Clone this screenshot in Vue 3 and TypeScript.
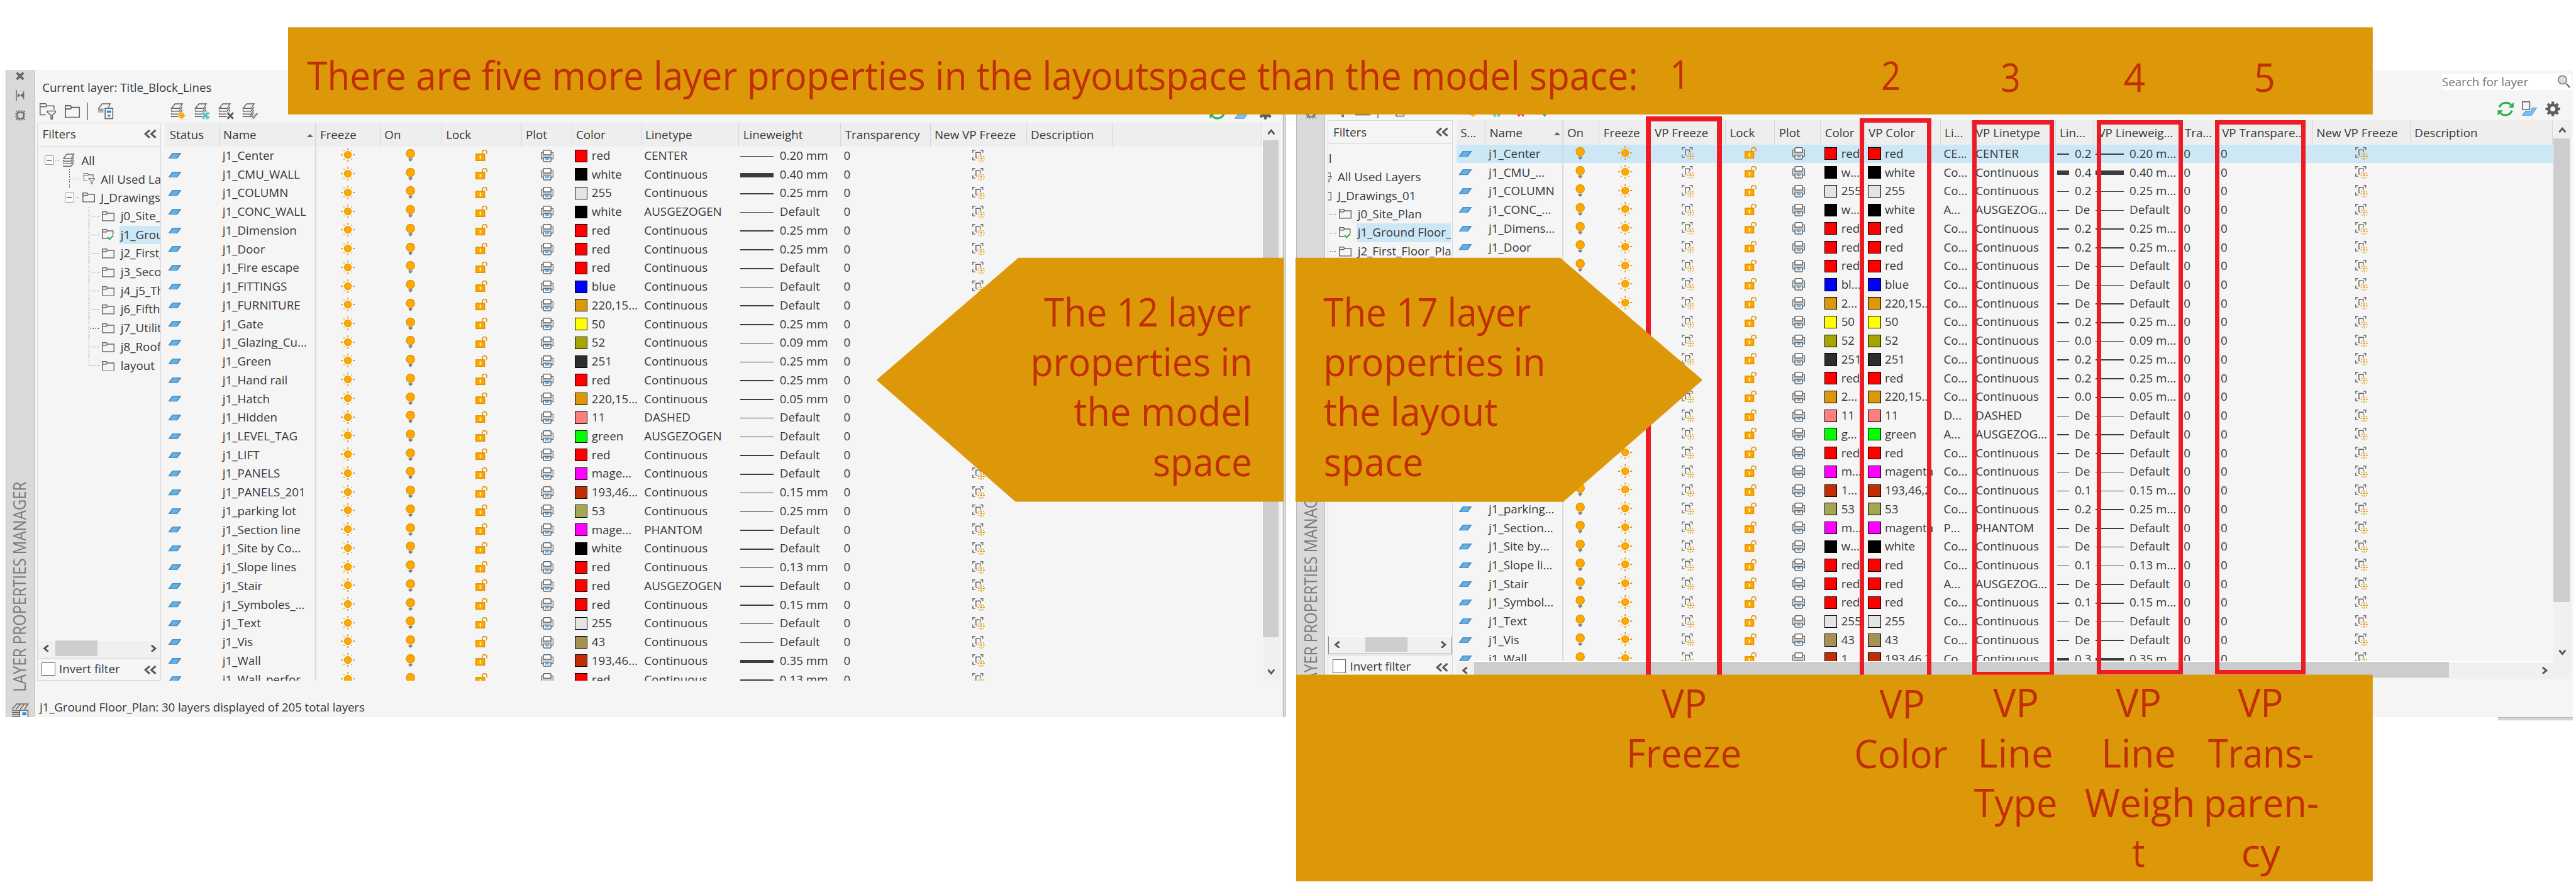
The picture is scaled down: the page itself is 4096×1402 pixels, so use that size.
<script setup lang="ts">
interface Column {
  id: string
  head: string
  width: number
  pad: number
}

interface Layer {
  name: string
  short: string
  swatch: string
  color: string
  shortColor: string
  vpColor: string
  linetype: string
  weight: string
}

interface Panel {
  id: string
  columns: Column[]
  rows: Layer[]
  folders: string[]
}

const HEX: Record<string, string> = {
  red: '#ff0000', white: '#000000', '255': '#e4e4e4', blue: '#0000ff',
  '220': '#dc9808', '50': '#ffff00', '52': '#a5a500', '251': '#2d2d2d',
  '11': '#ff7f7f', green: '#00ff00', magenta: '#ff00ff', '193': '#c12e02',
  '53': '#a5a552', '43': '#a59152',
}
const LONG: Record<string, string> = { magenta: 'mage...', '220': '220,15...', '193': '193,46...' }
const SHORT: Record<string, string> = {
  white: 'w...', blue: 'bl...', '220': '2...', green: 'g...', magenta: 'm...', '193': '1...',
}
const VP: Record<string, string> = { '220': '220,15...', '193': '193,46,2' }

// name | truncated name | colour | linetype | lineweight
// rows 7 to 19 have no truncated name: the arrow lies over that column there
const source = `j1_Center|j1_Center|red|CENTER|0.20
j1_CMU_WALL|j1_CMU_...|white|Continuous|0.40
j1_COLUMN|j1_COLUMN|255|Continuous|0.25
j1_CONC_WALL|j1_CONC_...|white|AUSGEZOGEN|Default
j1_Dimension|j1_Dimens...|red|Continuous|0.25
j1_Door|j1_Door|red|Continuous|0.25
j1_Fire escape||red|Continuous|Default
j1_FITTINGS||blue|Continuous|Default
j1_FURNITURE||220|Continuous|Default
j1_Gate||50|Continuous|0.25
j1_Glazing_Cu...||52|Continuous|0.09
j1_Green||251|Continuous|0.25
j1_Hand rail||red|Continuous|0.25
j1_Hatch||220|Continuous|0.05
j1_Hidden||11|DASHED|Default
j1_LEVEL_TAG||green|AUSGEZOGEN|Default
j1_LIFT||red|Continuous|Default
j1_PANELS||magenta|Continuous|Default
j1_PANELS_201||193|Continuous|0.15
j1_parking lot|j1_parking...|53|Continuous|0.25
j1_Section line|j1_Section...|magenta|PHANTOM|Default
j1_Site by Co...|j1_Site by...|white|Continuous|Default
j1_Slope lines|j1_Slope li...|red|Continuous|0.13
j1_Stair|j1_Stair|red|AUSGEZOGEN|Default
j1_Symboles_...|j1_Symbol...|red|Continuous|0.15
j1_Text|j1_Text|255|Continuous|Default
j1_Vis|j1_Vis|43|Continuous|Default
j1_Wall|j1_Wall|193|Continuous|0.35
j1_Wall_perfor...||red|Continuous|0.13`

const layers: Layer[] = source.split('\n').map((line) => {
  const [name, short, c, linetype, weight] = line.split('|')
  return {
    name, short, linetype, weight,
    swatch: HEX[c], color: LONG[c] ?? c, shortColor: SHORT[c] ?? c, vpColor: VP[c] ?? c,
  }
})

const cols = (start: number, list: [string, string, number, number][]): Column[] =>
  list.map(([id, head, end, pad], i) => ({
    id, head, pad, width: end - (i === 0 ? start : list[i - 1][2]),
  }))

const panels: Panel[] = [
  {
    id: 'model',
    rows: layers,
    folders: ['j0_Site_', 'j1_Ground', 'j2_First_', 'j3_Secon', 'j4_j5_Thi', 'j6_Fifth_', 'j7_Utility', 'j8_Roof_', 'layout'],
    columns: cols(498, [
      ['status', 'Status', 659.5, 6], ['name', 'Name', 950.5, 9.5], ['freeze', 'Freeze', 1144, 74.5],
      ['on', 'On', 1329, 75.5], ['lock', 'Lock', 1569, 100], ['plot', 'Plot', 1720, 57],
      ['color', 'Color', 1928, 9], ['linetype', 'Linetype', 2222.5, 9], ['weight', 'Lineweight', 2529, 4],
      ['zero', 'Transparency', 2798, 8], ['newvp', 'New VP Freeze', 3087.5, 125],
      ['blank', 'Description', 3346, 0], ['blank', '', 3795, 0],
    ]),
  },
  {
    id: 'layout',
    rows: layers.slice(0, 28),
    folders: ['j0_Site_Plan', 'j1_Ground Floor_P', 'j2_First_Floor_Plan'],
    columns: cols(4379, [
      ['status', 'S...', 4466.5, 6], ['name', 'Name', 4700, 9.5], ['on', 'On', 4809.5, 37.5],
      ['freeze', 'Freeze', 4963, 56.5], ['newvp', 'VP Freeze', 5189, 93.6], ['lock', 'Lock', 5337, 56],
      ['plot', 'Plot', 5475, 51.6], ['shortColor', 'Color', 5606, 11], ['vpColor', 'VP Color', 5835, 11],
      ['shortType', 'Li...', 5929, 9], ['vpType', 'VP Linetype', 6181, 11], ['shortWeight', 'Lin...', 6297, 4.5],
      ['vpWeight', 'VP Lineweig...', 6557, 4], ['zero', 'Tra...', 6669, 9],
      ['zero', 'VP Transpare...', 6953, 8], ['newvp', 'New VP Freeze', 7248, 129],
      ['blank', 'Description', 7676, 0],
    ]),
  },
]

const isText = (id: string) => ['name', 'linetype', 'shortType', 'vpType', 'zero'].includes(id)
const isSwatch = (id: string) => ['color', 'shortColor', 'vpColor'].includes(id)
const isWeight = (id: string) => ['weight', 'shortWeight', 'vpWeight'].includes(id)
const ICONS: Record<string, string> = {
  status: 'layer', freeze: 'sun', on: 'bulb', lock: 'lock', plot: 'printer', newvp: 'viewport',
}

const SHORT_TYPE: Record<string, string> = {
  CENTER: 'CE...', Continuous: 'Co...', AUSGEZOGEN: 'A...', DASHED: 'D...', PHANTOM: 'P...',
}

function cellText(id: string, row: Layer, panel: Panel): string {
  switch (id) {
    case 'name': return panel.id === 'model' ? row.name : row.short
    case 'linetype': return row.linetype
    case 'shortType': return SHORT_TYPE[row.linetype]
    case 'vpType': return row.linetype === 'AUSGEZOGEN' ? 'AUSGEZOG...' : row.linetype
    case 'color': return row.color
    case 'shortColor': return row.shortColor
    case 'vpColor': return row.vpColor
    case 'weight': return row.weight === 'Default' ? 'Default' : `${row.weight} mm`
    case 'vpWeight': return row.weight === 'Default' ? 'Default' : `${row.weight} m...`
    case 'shortWeight': return row.weight === 'Default' ? 'De' : row.weight.slice(0, 3)
    case 'zero': return '0'
    default: return ''
  }
}

const thickness = (w: string) => (w === '0.40' ? 13 : w === '0.35' ? 9 : 3)

const frames = [
  { x: 4947.5, y: 350, w: 229, h: 1700, b: 16 },
  { x: 5592, y: 356, w: 215, h: 1700, b: 14 },
  { x: 5929, y: 362, w: 247, h: 1670, b: 15 },
  { x: 6304, y: 362, w: 259, h: 1665, b: 15 },
  { x: 6660, y: 362, w: 272, h: 1665, b: 15 },
]

// text, left edge, baseline, drawn width
const notes: [string, number, number, number][] = [
  ['There are five more layer properties in the layoutspace than the model space:', 923, 271, 4002],
  ['1', 5021, 266, 59], ['2', 5656, 270, 59], ['3', 6016, 277, 59], ['4', 6385, 277, 65], ['5', 6777, 277, 64],
  ['The 12 layer', 3139, 981, 623], ['properties in', 3098, 1131, 668], ['the model', 3228, 1281, 535], ['space', 3466, 1431, 299],
  ['The 17 layer', 3979, 981, 624], ['properties in', 3979, 1131, 668], ['the layout', 3980, 1281, 523], ['space', 3980, 1431, 300],
  ['VP', 4995, 2158, 137], ['Freeze', 4890, 2307, 346],
  ['VP', 5651, 2160, 137], ['Color', 5575, 2309, 281],
  ['VP', 5993, 2156, 137], ['Line', 5946, 2306, 227], ['Type', 5935, 2456, 251],
  ['VP', 6362, 2156, 137], ['Line', 6318, 2306, 224], ['Weigh', 6268, 2456, 332], ['t', 6411, 2605, 38],
  ['VP', 6728, 2156, 137], ['Trans-', 6639, 2306, 318], ['paren-', 6625, 2456, 347], ['cy', 6738, 2605, 118],
]
</script>

<template>
  <div class="stage">
    <svg class="defs" width="0" height="0">
      <symbol id="layer" viewBox="0 0 41 18">
        <path d="M0 18 13 0H41L28 18Z" fill="#4c90c4" />
        <path d="M7 15 16 3H34L25 15Z" fill="#66b0e8" />
      </symbol>
      <symbol id="sun" viewBox="0 0 42 42">
        <path d="M21 0V6M21 36V42M0 21H6M36 21H42" stroke="#e39300" stroke-width="3" />
        <path d="M8 6h3v3h-3zM31 6h3v3h-3zM8 33h3v3h-3zM31 33h3v3h-3z" fill="#e39300" />
        <circle cx="21" cy="21" r="10.5" fill="#ffa800" stroke="#eb9900" stroke-width="2.5" />
      </symbol>
      <symbol id="bulb" viewBox="0 0 29 38">
        <circle cx="14.5" cy="13.5" r="12.6" fill="#ffa800" stroke="#dc9200" stroke-width="2.4" />
        <path d="M9 28H20V34H17V37H12V34H9Z" fill="#858585" />
      </symbol>
      <symbol id="lock" viewBox="0 0 36 35">
        <path d="M21 12V5L24 1.5H31L34 5V13" fill="none" stroke="#e39300" stroke-width="3" />
        <rect x="1.5" y="13" width="26" height="20" fill="#ffa800" stroke="#e39300" stroke-width="3" />
        <path d="M14.5 18V28" stroke="#fff" stroke-width="3.4" />
      </symbol>
      <symbol id="printer" viewBox="0 0 38 38">
        <path d="M7 8.500H1.500V27.500H7M31 8.500H36.500V27.500H31" fill="#e8e8e8" stroke="#666" stroke-width="3" />
        <path d="M3 9H35V26H3Z" fill="#f3f3f3" />
        <path d="M3 16H35V21H3Z" fill="#c9c9c9" />
        <path d="M7.500 15V4L9.500 1.500H28.500L30.500 4V15Z" fill="#fff" stroke="#666" stroke-width="3" />
        <path d="M7.500 23.500H30.500V33L28.500 36H9.500L7.500 33Z" fill="#fff" stroke="#666" stroke-width="3" />
        <path d="M13 25H25V31H13Z" fill="#66b0e8" />
      </symbol>
      <symbol id="viewport" viewBox="0 0 38 38">
        <path d="M1.500 9V1.500H9M24 1.500H31.500V9M1.500 22V30.500H9M11 24V8H24V16M11 24H14" fill="none" stroke="#666" stroke-width="2.800" />
        <path d="M26.500 17V23M26.500 32V38M16 27H21M32 27H38M26.500 24V30M23 27H30" stroke="#e39300" stroke-width="2.400" />
        <path d="M18.500 19h3v3h-3zM32 19h3v3h-3zM18.500 32h3v3h-3zM32 32h3v3h-3z" fill="#e39300" />
      </symbol>
      <symbol id="folder" viewBox="0 0 38 30">
        <path d="M1.500 28.500V1.500H14L17 5.500H36.500V28.500ZM1.500 9H14L17 5.500" fill="none" stroke="#666" stroke-width="2.800" />
      </symbol>
      <symbol id="folder-filter" viewBox="0 0 50 50">
        <path d="M18 35H1.500V1.500H18L22 8H43V20M1.500 11H18L22 8" fill="none" stroke="#666" stroke-width="2.900" />
        <path d="M23 23.500H48.500V27L38.500 36V48H34V36L23 27Z" fill="#f5f5f5" stroke="#666" stroke-width="2.900" />
      </symbol>
      <symbol id="folder-check" viewBox="0 0 38 36">
        <path d="M16 28.500H1.500V1.500H14L17 5.500H33.500V18M1.500 9H14L17 5.500" fill="none" stroke="#666" stroke-width="2.800" />
        <path d="M17 24 23 31 34 20" fill="none" stroke="#28b050" stroke-width="4" />
      </symbol>
      <symbol id="stack" viewBox="0 0 36 40">
        <path d="M2 15 12 2H33L25 15ZM2 19V23H24L33 11M2 28V31H24L33 19M2 36V38.500H24L33 27" fill="none" stroke="#666" stroke-width="2.800" />
      </symbol>
      <symbol id="stack-half" viewBox="0 0 50 50">
        <path d="M2 18 14 2H38L33 12M18 18H2M2 23H18" fill="none" stroke="#666" stroke-width="2.900" />
        <path d="M2 25H18V29H2Z" fill="#bbb" />
        <rect x="23" y="15.500" width="23" height="31" fill="#f5f5f5" stroke="#666" stroke-width="3" />
        <path d="M28 22H41V29H28Z" fill="#1d8ee8" />
        <path d="M34.500 33V42M30 37.500H39" stroke="#666" stroke-width="2.600" />
      </symbol>
      <symbol id="chevrons" viewBox="0 0 38 26">
        <path d="M17 1.500 4 13 17 24.500M35 1.500 22 13 35 24.500" fill="none" stroke="#5c5c5c" stroke-width="6" />
      </symbol>
      <symbol id="angle" viewBox="0 0 20 22">
        <path d="M16.500 1.500 5 11 16.500 20.500" fill="none" stroke="#555" stroke-width="5.500" />
      </symbol>
      <symbol id="gear" viewBox="0 0 46 46">
        <path d="M23 1V45M1 23H45M7.500 7.500 38.500 38.500M38.500 7.500 7.500 38.500" stroke="#5f5f5f" stroke-width="8" />
        <circle cx="23" cy="23" r="12" fill="#f5f5f5" stroke="#5f5f5f" stroke-width="9" />
      </symbol>
      <symbol id="refresh" viewBox="0 0 50 46">
        <path d="M6 18C11 3 32 0 41 11M44 28C39 43 18 46 9 35" fill="none" stroke="#27b24b" stroke-width="6" />
        <path d="M49 3V19H33ZM1 43V27H17Z" fill="#27b24b" />
      </symbol>
      <symbol id="sheet" viewBox="0 0 45 44">
        <rect x="1.500" y="1.500" width="22" height="23" fill="#f5f5f5" stroke="#666" stroke-width="3" />
        <path d="M1 42 11 30H26L31 20H44L29 42Z" fill="#7cc0f4" stroke="#5a9ad0" stroke-width="2" />
      </symbol>
    </svg>

    <div class="workspace">
      <section v-for="panel in panels" :key="panel.id" class="panel" :class="panel.id">
        <aside class="rail">
          <svg class="r-close" width="26" height="26" viewBox="0 0 26 26"><path d="M3 3 23 23M23 3 3 23" stroke="#666" stroke-width="7" /></svg>
          <svg class="r-pin" width="26" height="32" viewBox="0 0 26 32"><path d="M2 0V32M24 4V28" stroke="#777" stroke-width="3" /><path d="M6 11 13 16 6 22ZM23 9 14 16 23 23Z" fill="#666" stroke="#666" /></svg>
          <svg class="r-gear" width="32" height="32" viewBox="0 0 46 46">
            <circle cx="23" cy="23" r="14" fill="none" stroke="#6c6c6c" stroke-width="5" />
            <path d="M17 1V9M29 1V9M17 37V45M29 37V45M1 17H9M1 29H9M37 17H45M37 29H45M4 4 12 12M42 4 34 12M4 42 12 34M42 42 34 34" stroke="#6c6c6c" stroke-width="5" />
          </svg>
          <svg class="r-title" width="60" height="660" viewBox="0 0 60 660">
            <text transform="translate(48 650) rotate(-90)" textLength="632" lengthAdjust="spacingAndGlyphs">LAYER PROPERTIES MANAGER</text>
          </svg>
          <svg class="r-stack" width="52" height="42" viewBox="0 0 52 42">
            <path d="M2 18 16 2H50L40 18M14 18 28 2M26 18 38 4M2 22H24M2 28H24M2 34H24M2 40H24" fill="none" stroke="#666" stroke-width="2.800" />
            <rect x="25" y="21" width="25" height="30" fill="#f5f5f5" stroke="#666" stroke-width="3" />
            <path d="M33 27H45V36H33Z" fill="#1d8ee8" />
          </svg>
        </aside>

        <div class="content">
          <header class="top">
            <div class="title">
              <span v-if="panel.id === 'model'" class="current">Current layer: Title_Block_Lines</span>
              <label v-else class="search">
                <span>Search for layer</span>
                <svg width="40" height="40" viewBox="0 0 40 40"><path d="M27 26 38 38" stroke="#8a6a48" stroke-width="4.500" /><circle cx="16" cy="15" r="12.500" fill="#ddd" stroke="#888" stroke-width="3.500" /></svg>
              </label>
            </div>
            <div class="tools">
              <svg width="50" height="50"><use href="#folder-filter" /></svg>
              <svg class="t-folder" width="46" height="39" viewBox="0 0 38 30" preserveAspectRatio="none"><use href="#folder" width="38" height="30" /></svg>
              <i class="bar" />
              <svg class="t-state" width="50" height="50"><use href="#stack-half" /></svg>
              <svg class="t-new" width="50" height="50" viewBox="0 0 50 50">
                <use href="#stack" width="40" height="42" />
                <circle cx="34" cy="38" r="11" fill="#f5f5f5" />
                <path d="M34 26V49M22.500 37.500H45.500M27 30 41 45M41 30 27 45" stroke="#ffa800" stroke-width="3" /><circle cx="34" cy="37.500" r="7" fill="#ffa800" />
              </svg>
              <svg class="t-vp" width="50" height="50" viewBox="0 0 50 50">
                <use href="#stack" width="40" height="42" />
                <circle cx="34" cy="37" r="12" fill="#f5f5f5" />
                <path d="M29 25V49M38 25V49M22 32H46M22 41H46M24 28 44 46M44 28 24 46" stroke="#5bbcc6" stroke-width="3" />
              </svg>
              <svg class="t-del" width="50" height="50" viewBox="0 0 50 50">
                <use href="#stack" width="40" height="42" />
                <path d="M27 28 45 47M45 28 27 47" stroke="#f5f5f5" stroke-width="11" />
                <path class="mark-x" d="M28 29 45 47M45 29 28 47" stroke-width="5.500" />
              </svg>
              <svg class="t-set" width="50" height="50" viewBox="0 0 50 50">
                <use href="#stack" width="40" height="42" />
                <path class="mark-v" d="M25 34 34 44 46 30" fill="none" stroke-width="6" />
              </svg>
              <div class="corner">
                <svg width="50" height="46"><use href="#refresh" /></svg>
                <svg width="45" height="44"><use href="#sheet" /></svg>
                <svg width="46" height="46"><use href="#gear" /></svg>
              </div>
            </div>
          </header>

          <div class="main">
            <div class="filters">
              <div class="f-head"><span>Filters</span><svg width="38" height="26"><use href="#chevrons" /></svg></div>
              <div class="tree">
                <div class="scroll">
                  <div class="node all">
                    <i class="minus" /><i class="dots w14" />
                    <svg width="36" height="40"><use href="#stack" /></svg><span>All</span>
                  </div>
                  <div class="node used">
                    <i class="dots w30" /><svg width="37" height="34"><use href="#folder-filter" /></svg><span>All Used Layers</span>
                  </div>
                  <div class="node root">
                    <i class="minus" /><i class="dots w14" /><svg width="38" height="30"><use href="#folder" /></svg><span>J_Drawings_01</span>
                  </div>
                  <div v-for="(f, i) in panel.folders" :key="f" class="node leaf" :class="{ on: i === 1, last: i === 8 }">
                    <i class="dots w30" />
                    <svg v-if="i === 1" width="38" height="36"><use href="#folder-check" /></svg>
                    <svg v-else width="38" height="30"><use href="#folder" /></svg>
                    <span>{{ f }}</span>
                  </div>
                </div>
              </div>
              <div class="f-scroll">
                <svg width="20" height="22"><use href="#angle" /></svg>
                <i class="thumb" />
                <svg class="flip" width="20" height="22"><use href="#angle" /></svg>
              </div>
              <div class="f-foot"><i class="check" /><span>Invert filter</span><svg width="38" height="26"><use href="#chevrons" /></svg></div>
            </div>

            <div class="grid">
              <div class="rows head">
                <div v-for="(c, i) in panel.columns" :key="i" class="cell" :class="{ fixed: i === 1 }" :style="{ width: c.width + 'px' }">
                  <span>{{ c.head }}</span><i v-if="c.id === 'name'" class="sort" />
                </div>
              </div>
              <div class="body">
                <div v-for="(row, r) in panel.rows" :key="row.name" class="rows line" :class="{ picked: panel.id === 'layout' && r === 0 }">
                  <div v-for="(c, i) in panel.columns" :key="i" class="cell" :class="[c.id, { fixed: i === 1 }]" :style="{ width: c.width + 'px', paddingLeft: c.pad + 'px' }">
                    <svg v-if="ICONS[c.id]" class="icon"><use :href="'#' + ICONS[c.id]" /></svg>
                    <span v-else-if="isText(c.id)">{{ cellText(c.id, row, panel) }}</span>
                    <template v-else-if="isSwatch(c.id)">
                      <i class="swatch" :style="{ background: row.swatch }" /><span>{{ cellText(c.id, row, panel) }}</span>
                    </template>
                    <template v-else-if="isWeight(c.id)">
                      <i class="stroke" :style="{ height: thickness(row.weight) + 'px' }" /><span>{{ cellText(c.id, row, panel) }}</span>
                    </template>
                  </div>
                </div>
              </div>
              <div v-if="panel.id === 'layout'" class="g-scroll">
                <svg width="20" height="22"><use href="#angle" /></svg>
                <i class="thumb" />
                <svg class="flip" width="20" height="22"><use href="#angle" /></svg>
              </div>
            </div>

            <div class="v-scroll">
              <svg class="up" width="20" height="22"><use href="#angle" /></svg>
              <i class="thumb" />
              <svg class="down" width="20" height="22"><use href="#angle" /></svg>
            </div>
          </div>

          <footer><span v-if="panel.id === 'model'">j1_Ground Floor_Plan: 30 layers displayed of 205 total layers</span></footer>
        </div>
      </section>
    </div>
    <i class="edge" />

    <i
      v-for="f in frames" :key="f.x" class="frame"
      :style="{ left: f.x + 'px', top: f.y + 'px', width: f.w + 'px', height: f.h + 'px', borderWidth: f.b + 'px' }"
    />

    <svg class="notes" width="7745" height="2651" viewBox="0 0 7745 2651">
      <g fill="#dc9808">
        <rect x="866" y="82" width="6268" height="262" />
        <path d="M3860 775H3062L2635 1142 3053 1508H3860Z" />
        <path d="M3895 775H4691L5119 1142 4700 1508.500H3895Z" />
        <rect x="3897" y="2028" width="3237" height="621" />
      </g>
      <text v-for="(n, i) in notes" :key="i" :x="n[1]" :y="n[2]" :textLength="n[3]" lengthAdjust="spacingAndGlyphs">{{ n[0] }}</text>
    </svg>
  </div>
</template>

<style>
html, body { margin: 0; overflow: hidden; background: #fff; }
</style>

<style scoped>
.stage { position: relative; width: 7745px; height: 2651px; zoom: 0.528857; overflow: hidden; background: #fff; color: #383838; font: 35.5px "Open Sans", "Noto Sans", sans-serif; white-space: nowrap; }
.stage * { box-sizing: border-box; }
.defs { position: absolute; }
i { display: block; flex: none; font-style: normal; }
svg { display: block; flex: none; }

.workspace { display: flex; align-items: flex-end; padding-left: 17px; height: 2156px; }
.panel { display: flex; background: #f5f5f5; flex: none; }
.model { width: 3850px; height: 1947px; border-right: 3px solid #b8b8b8; box-shadow: inset -5px 0 #e0e0e0, inset -8px 0 #b8b8b8; margin-right: 31px; }
.layout { width: 3837px; height: 1944px; }

.rail { width: 87px; flex: none; background: #d9d9d9; border: solid #b8b8b8; border-width: 0 3px; display: flex; flex-direction: column; align-items: center; }
.r-close { margin-top: 6px; }
.r-pin { margin-top: 29px; }
.r-gear { margin-top: 29px; }
.r-title { margin-top: auto; }
.r-title text { font-size: 50px; fill: #7a7a7a; }
.r-stack { margin-top: 25px; }
.layout .r-close { margin-top: 0; }
.layout .r-pin { margin-top: 27px; }
.layout .r-stack { margin-bottom: 6px; }

.content { flex: 1; min-width: 0; display: flex; flex-direction: column; }
.top { height: 159px; padding: 0 0 7px 16px; display: flex; flex-direction: column; justify-content: flex-end; }
.title { display: flex; align-items: center; height: 60px; margin-bottom: 17px; padding-left: 7px; }
.current { letter-spacing: -0.1px; }
.layout .top { height: 150px; padding-bottom: 8px; }
.search { display: flex; align-items: center; justify-content: space-between; width: 390px; height: 50px; margin: -19px 3px 0 auto; padding-right: 4px; background: #fff; color: #767676; }
.tools { display: flex; align-items: center; height: 52px; }
.t-folder { margin-left: 24px; }
.bar { width: 3px; height: 54px; background: #8f8f8f; margin: 0 30px 0 21px; }
.t-new { margin-left: 169px; }
.t-vp { margin-left: 22px; }
.t-del { margin-left: 21px; }
.t-set { margin-left: 23px; }
.mark-x { stroke: #5a5a5a; }
.mark-v { stroke: #999; }
.layout .mark-x { stroke: #f23a3a; }
.layout .mark-v { stroke: #28b050; }
.corner { margin: 0 36px 0 auto; display: flex; gap: 25px; }
.model .corner { margin-right: 38px; padding-top: 4px; }

.main { flex: 1; min-height: 0; display: flex; padding-left: 7px; }
.filters { width: 374px; height: 1678px; border: 3px solid #d9d9d9; margin-right: 13px; display: flex; flex-direction: column; flex: none; }
.f-head { height: 70px; flex: none; border-bottom: 3px solid #d9d9d9; display: flex; align-items: center; justify-content: space-between; padding: 0 12px 1px 15px; }
.f-head span { margin-top: -4px; }
.tree { flex: 1; min-height: 0; overflow: hidden; padding-top: 13px; }
.layout .scroll { margin-left: -162px; width: 530px; }
.node { height: 56.23px; display: flex; align-items: center; position: relative; }
.all { padding-left: 21px; }
.used { padding-left: 97px; }
.root { padding-left: 81px; }
.leaf { padding-left: 157px; }
.minus { width: 29px; height: 29px; border: 3px solid #999; border-radius: 4px; background: linear-gradient(#3f5fb0, #3f5fb0) center / 15px 3px no-repeat #fafafa; }
.dots { height: 2px; background: repeating-linear-gradient(90deg, #666 0 2px, transparent 2px 5px); }
.w14 { width: 14px; margin: 0 6px 0 4px; }
.all .w14 { margin-right: 8px; }
.w30 { width: 30px; margin-right: 7px; }
.used .w30 { margin-right: 10px; }
.leaf .w30 { margin-right: 6px; }
.all span { margin-left: 20px; }
.used span { margin-left: 16px; }
.root span { margin-left: 18px; }
.leaf span { margin-left: 15px; height: 56px; line-height: 54px; padding-left: 4px; flex: 1; overflow: hidden; }
.leaf.on span { background: #cce8f6; }
.used::before, .leaf::before { content: ""; position: absolute; left: 95px; top: 0; bottom: 0; width: 2px; background: repeating-linear-gradient(#666 0 2px, transparent 2px 5px); }
.leaf::before { left: 154px; }
.leaf.last::before { bottom: 28px; }
.f-scroll { height: 58px; flex: none; border-top: 3px solid #fff; border-bottom: 3px solid #d9d9d9; background: #f0f0f0; display: flex; align-items: center; padding: 0 12px 5px 15px; }
.f-scroll .thumb { width: 128px; height: 47px; margin: 0 auto 0 18px; background: #cdcdcd; }
.flip { transform: scaleX(-1); }
.f-foot { height: 64px; flex: none; display: flex; align-items: center; padding: 0 12px 2px 12px; }
.f-foot span { margin-top: -5px; }
.f-foot svg { margin: 6px 0 0 auto; }
.check { width: 41px; height: 41px; border: 3px solid #666; background: #fff; margin-right: 12px; }
.layout .f-scroll { border-color: #fff #828790 #828790; border-style: solid; border-width: 3px; height: 55px; margin-bottom: 4px; padding-right: 14px; }
.layout .f-scroll .thumb { margin-left: 74px; height: 43px; }
.layout .f-foot { border-top: 3px solid #d9d9d9; height: 67px; padding-bottom: 5px; }
.layout .filters { width: 376px; margin-right: 11px; }

.grid { flex: none; display: flex; flex-direction: column; height: 1678px; overflow: hidden; }
.rows { display: flex; }
.head { height: 72px; flex: none; background: #eee; }
.cell { flex: none; display: flex; align-items: center; overflow: hidden; }
.head .cell { border-right: 3px solid #d6d6d6; padding-left: 12px; }
.head .cell.fixed { border-right: 5px solid #d9d9d9; }
.head .cell:last-child { border-right-width: 2px; }
.sort { margin: 8px 5px 0 auto; border: solid transparent; border-width: 0 11px 11px; border-bottom-color: #666; }
.body { flex: 1; min-height: 0; overflow: hidden; margin-top: -1px; }
.line { height: 56.23px; }
.picked { background: linear-gradient(#cce8f6, #cce8f6) 0 1px / 100% 56px no-repeat; }
.line .fixed { border-right: 5px solid #d9d9d9; }
.line span { margin-top: -2px; }
.status .icon { width: 41px; height: 18px; margin-top: 2px; }
.freeze .icon { width: 42px; height: 42px; margin-top: -2px; }
.on .icon { width: 29px; height: 38px; }
.lock .icon { width: 36px; height: 35px; margin-top: -1px; }
.plot .icon, .newvp .icon { width: 38px; height: 38px; margin-top: 2px; }
.swatch { width: 38px; height: 38px; border: 3px solid #000; margin-right: 12px; margin-top: 2px; }
.stroke { width: 100px; background: #3c3c3c; margin: 5px 18px 0 0; }
.shortWeight .stroke { width: 35px; }
.vpWeight .stroke { width: 84px; }
.g-scroll { height: 53px; flex: none; border-top: 3px solid #fff; background: #f0f0f0; display: flex; align-items: center; padding: 0 15px; }
.g-scroll .thumb { width: 2932px; height: 47px; margin: 0 auto 0 18px; background: #cdcdcd; align-self: flex-start; }

.v-scroll { width: 54px; height: 1678px; flex: none; background: #f0f0f0; border-left: 3px solid #f9f9f9; display: flex; flex-direction: column; align-items: center; }
.v-scroll .up { transform: rotate(90deg); margin: 18px 0 14px; }
.v-scroll .thumb { width: 48px; height: 1494px; background: #cdcdcd; align-self: flex-start; }
.v-scroll .down { transform: rotate(-90deg); margin-top: auto; margin-bottom: 16px; }
.layout .v-scroll .thumb { height: 1393px; }
.layout .v-scroll .down { margin-bottom: 68px; }

footer { height: 110px; flex: none; padding: 52px 0 0 15px; line-height: 52px; letter-spacing: -0.2px; }
.layout footer { height: 116px; }
.edge { position: absolute; left: 7510px; top: 2156px; width: 225px; height: 9px; background: #d9d9d9; border: solid #b8b8b8; border-width: 3px 0; }
.frame { position: absolute; border: solid #ed1c24; }
.notes { position: absolute; left: 0; top: 0; }
.notes text { font-size: 118px; fill: #c12e02; }
</style>
